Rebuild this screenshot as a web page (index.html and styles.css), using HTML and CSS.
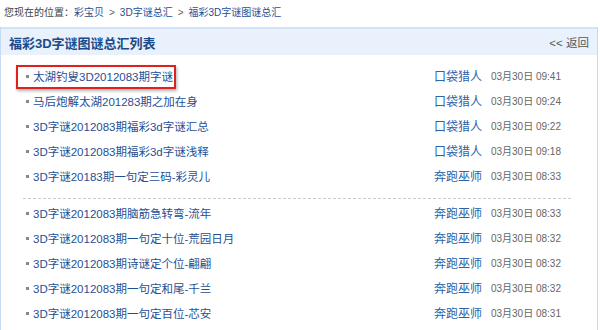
FILE: index.html
```html
<!DOCTYPE html>
<html lang="zh-CN">
<head>
  <meta charset="UTF-8">
  <title>福彩3D字谜图谜总汇列表</title>
  <link rel="stylesheet" href="styles.css">
</head>
<body>
  <div class="crumb">
    您现在的位置：<a href="#">彩宝贝</a><span class="sep">&gt;</span><a href="#">3D字谜总汇</a><span class="sep">&gt;</span><a href="#">福彩3D字谜图谜总汇</a>
  </div>

  <div class="box">
    <div class="box-head">
      <h2>福彩3D字谜图谜总汇列表</h2>
      <a class="back" href="#">&lt;&lt; 返回</a>
    </div>

    <ul class="list">
      <li><span class="title"><a class="hl" href="#">太湖钓叟3D2012083期字谜</a></span><a class="author" href="#">口袋猎人</a><span class="date">03月30日 09:41</span></li>
      <li><span class="title"><a href="#">马后炮解太湖201283期之加在身</a></span><a class="author" href="#">口袋猎人</a><span class="date">03月30日 09:24</span></li>
      <li><span class="title"><a href="#">3D字谜2012083期福彩3d字谜汇总</a></span><a class="author" href="#">口袋猎人</a><span class="date">03月30日 09:22</span></li>
      <li><span class="title"><a href="#">3D字谜2012083期福彩3d字谜浅释</a></span><a class="author" href="#">口袋猎人</a><span class="date">03月30日 09:18</span></li>
      <li><span class="title"><a href="#">3D字谜20183期一句定三码-彩灵儿</a></span><a class="author" href="#">奔跑巫师</a><span class="date">03月30日 08:33</span></li>
    </ul>
    <ul class="list">
      <li><span class="title"><a href="#">3D字谜2012083期脑筋急转弯-流年</a></span><a class="author" href="#">奔跑巫师</a><span class="date">03月30日 08:33</span></li>
      <li><span class="title"><a href="#">3D字谜2012083期一句定十位-荒园日月</a></span><a class="author" href="#">奔跑巫师</a><span class="date">03月30日 08:32</span></li>
      <li><span class="title"><a href="#">3D字谜2012083期诗谜定个位-翩翩</a></span><a class="author" href="#">奔跑巫师</a><span class="date">03月30日 08:32</span></li>
      <li><span class="title"><a href="#">3D字谜2012083期一句定和尾-千兰</a></span><a class="author" href="#">奔跑巫师</a><span class="date">03月30日 08:32</span></li>
      <li><span class="title"><a href="#">3D字谜2012083期一句定百位-芯安</a></span><a class="author" href="#">奔跑巫师</a><span class="date">03月30日 08:31</span></li>
    </ul>
  </div>
</body>
</html>
```

FILE: styles.css
```css
body {
  margin: 0;
  font-family: "Liberation Sans", "Noto Sans CJK SC", sans-serif;
  font-size: 12px;
  color: #333;
  background: #fff;
}
a {
  color: #1f4f94;
  text-decoration: none;
}
.crumb {
  height: 27px;
  line-height: 26px;
  padding-left: 4px;
  font-size: 10px;
  color: #444;
}
.crumb .sep {
  color: #666;
  margin: 0 5px;
}
.box {
  width: 596px;
  border-left: 1px solid #c6daf2;
  border-right: 1px solid #c6daf2;
  height: 303px;
  overflow: hidden;
}
.box-head {
  display: flex;
  justify-content: space-between;
  align-items: center;
  height: 26px;
  background: #e9f1fc;
  border-top: 2px solid #d3e3f7;
  padding: 0 8px 0 8px;
}
.box-head h2 {
  margin: 0;
  font-size: 13px;
  font-weight: bold;
  color: #1b4a8a;
}
.back {
  color: #555;
  font-size: 11.5px;
}
.list {
  list-style: none;
  margin: 0 26px 0 22px;
  padding: 8px 0 10px;
  border-bottom: 1px dashed #ccc;
}
.list + .list {
  padding-top: 1px;
  border-bottom: none;
}
.list li {
  display: flex;
  align-items: center;
  height: 25px;
  padding: 0 10px 0 10px;
  position: relative;
}
.list li::before {
  content: "";
  position: absolute;
  left: 3px;
  top: 12px;
  width: 3px;
  height: 3px;
  background: #888;
}
.title {
  flex: 1;
  font-size: 11.5px;
}
.hl {
  position: relative;
}
.hl::before {
  content: "";
  position: absolute;
  left: -17px;
  right: -3px;
  top: -6px;
  bottom: -6px;
  border: 2px solid #e0201c;
  box-shadow: 1px 2px 3px rgba(0, 0, 0, 0.3);
}
.author {
  font-size: 12px;
  color: #2a63a8;
}
.date {
  margin-left: 9px;
  white-space: nowrap;
  color: #666;
  font-size: 10px;
}
```
